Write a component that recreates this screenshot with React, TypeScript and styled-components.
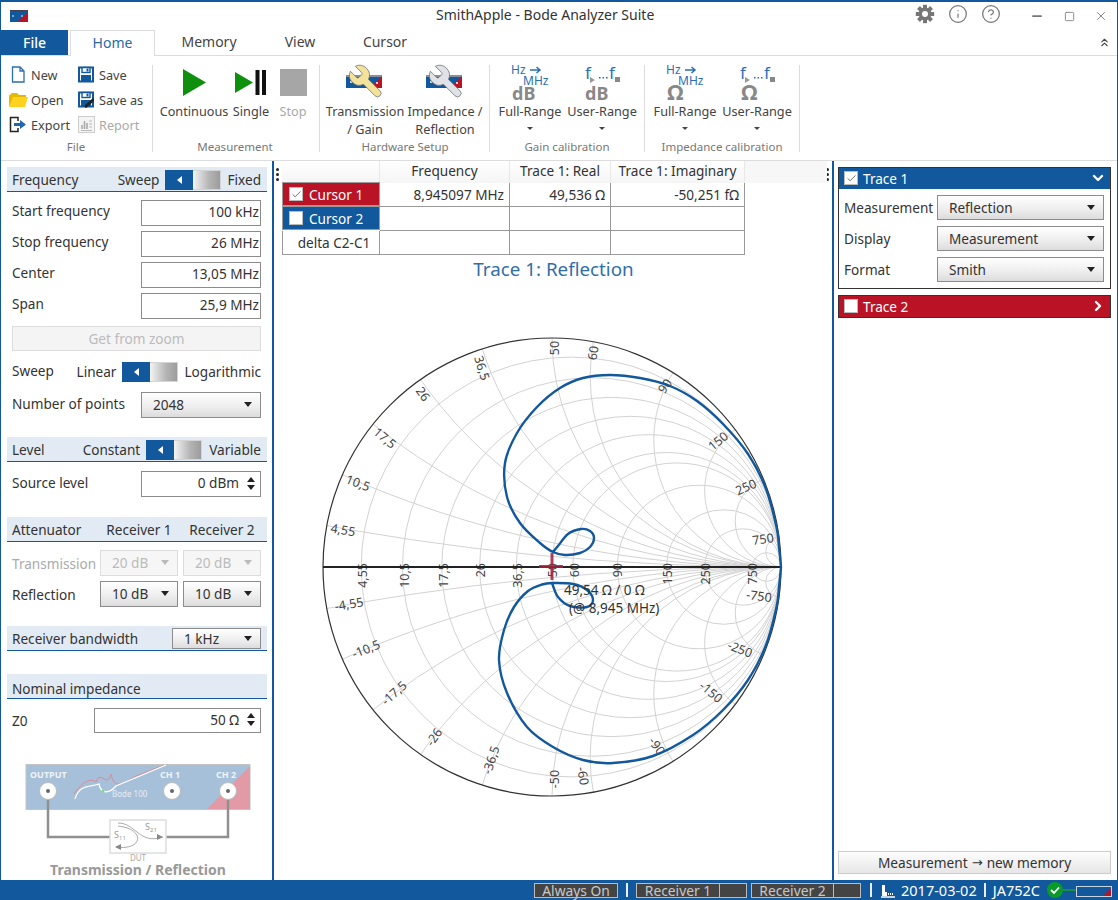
import React from 'react';
import styled, { createGlobalStyle } from 'styled-components';
import { Info, CircleHelp, X, Minus, Square, ChevronsUp, ChevronDown, ChevronRight, Check } from 'lucide-react';

const BLUE = '#12589c';
const RED = '#bb1326';
const FONT = '"Noto Sans", "Open Sans", "Liberation Sans", sans-serif';

const GlobalStyle = createGlobalStyle`
  html, body { margin: 0; padding: 0; background: #fff; }
  body { font-family: ${FONT}; font-size: 13.6px; color: #333; }
  * { box-sizing: border-box; }
`;

const Window = styled.div`
  width: 1118px; height: 900px; display: flex; flex-direction: column; overflow: hidden;
  border-top: 2px solid ${BLUE}; border-left: 1px solid ${BLUE}; border-right: 1px solid ${BLUE}; background: #fff;
`;
const TitleBar = styled.div`height: 28px; display: flex; align-items: center; flex: none;`;
const LogoSlot = styled.div`width: 435px; padding-left: 9px; display: flex; align-items: center; flex: none;`;
const Title = styled.div`font-size: 14px; color: #333; width: 217px; text-align: center; white-space: nowrap; margin-top: -3px;`;
const TitleIcons = styled.div`flex: 1; display: flex; align-items: center; padding-left: 255px; color: #777;`;
const TitleIcon = styled.span<{ $w: number; $ml?: number; $up?: number }>`
  width: ${p => p.$w}px; margin-left: ${p => p.$ml ?? 0}px; margin-top: ${p => -(p.$up ?? 0)}px;
  display: flex; justify-content: center; align-items: center;
`;

const TabRow = styled.div`height: 26px; display: flex; align-items: stretch; border-bottom: 1px solid #ddd; flex: none;`;
const FileTab = styled.div`width: 67px; height: 25px; padding-bottom: 1px; background: ${BLUE}; color: #fff; font-size: 14px; font-weight: 500; display: flex; align-items: center; justify-content: center;`;
const Tab = styled.div<{ $w: number; $active?: boolean }>`
  width: ${p => p.$w}px; height: ${p => (p.$active ? 26 : 25)}px; padding-bottom: 2px; font-size: 14px; display: flex; align-items: center; justify-content: center;
  color: ${p => (p.$active ? '#2a6aa6' : '#444')};
  ${p => p.$active && `margin-left: 2px; background:#fff; border:1px solid #ddd; border-bottom:none; position:relative;`}
`;
const Collapse = styled.div`margin-left: auto; padding-right: 6px; display: flex; align-items: center; color: #444;`;

const Ribbon = styled.div`height: 105px; padding-top: 6px; display: flex; border-bottom: 1px solid #ddd; flex: none;`;
const Group = styled.div<{ $w: number; $pl: number }>`width: ${p => p.$w}px; padding-left: ${p => p.$pl}px; height: 94px; display: flex; flex-direction: column; flex: none;`;
const GroupBody = styled.div`flex: 1; display: flex; min-height: 0;`;
const GroupLabel = styled.div<{ $offset: number }>`height: 18px; line-height: 18px; font-size: 11.5px; text-align: center; color: #777; margin-left: ${p => p.$offset}px; white-space: nowrap;`;
const Separator = styled.div`width: 1px; height: 87px; background: #ddd; margin-top: 3px; flex: none;`;
const SmallGrid = styled.div`display: grid; grid-template-columns: 68px 68px; grid-auto-rows: 25px; align-content: start;`;
const SmallButton = styled.div<{ $off?: boolean }>`display: flex; align-items: center; gap: 3px; font-size: 12.7px; white-space: nowrap; color: ${p => (p.$off ? '#aaa' : '#444')};`;
const SmallIcon = styled.span`width: 20px; height: 20px; display: flex; align-items: center; justify-content: center; flex: none;`;
const LargeButton = styled.div<{ $w: number; $off?: boolean }>`
  width: ${p => p.$w}px; display: flex; flex-direction: column; align-items: center; flex: none;
  font-size: 12.7px; line-height: 18px; text-align: center; white-space: nowrap; color: ${p => (p.$off ? '#aaa' : '#444')};
`;
const LargeIcon = styled.div`height: 40px; display: flex; align-items: center; justify-content: center;`;
const RibbonCaret = styled.div`width: 0; height: 0; margin-top: 7px; border-left: 3px solid transparent; border-right: 3px solid transparent; border-top: 3px solid #444;`;

const Main = styled.div`flex: 1; display: flex; min-height: 0;`;
const LeftPanel = styled.div`width: 273px; flex: none; border-right: 2px solid ${BLUE}; padding: 6px 5px 0 6px; display: flex; flex-direction: column;`;
const CenterPanel = styled.div`flex: 1; min-width: 0; position: relative; display: flex; flex-direction: column; padding-left: 8px;`;
const RightPanel = styled.div`width: 285px; flex: none; border-left: 2px solid ${BLUE}; padding: 6px 6px 6px 4px; display: flex; flex-direction: column;`;

const Section = styled.section<{ $gap: number }>`margin-bottom: ${p => p.$gap}px; flex: none;`;
const SectionHeader = styled.div`
  height: 25px; background: #e2ebf3; border-bottom: 1px solid ${BLUE}; display: flex; align-items: center;
  padding: 1px 6px 0 5px; color: #333; white-space: nowrap;
`;
const NominalHeader = styled(SectionHeader)`padding-top: 4px;`;
const AttHeader = styled(SectionHeader)`display: grid; grid-template-columns: 83px 78px 78px; column-gap: 5px;`;
const HeaderTitle = styled.span`flex: 1;`;
const CenterCell = styled.span`text-align: center;`;
const SectionBody = styled.div<{ $pt?: number }>`padding: ${p => p.$pt ?? 8}px 6px 0 5px; display: flex; flex-direction: column; gap: 5px;`;
const Row = styled.div<{ $h?: number; $mt?: number; $lh?: number }>`
  height: ${p => p.$h ?? 26}px; margin-top: ${p => p.$mt ?? 0}px; line-height: ${p => p.$lh ?? 22}px;
  display: flex; align-items: flex-start; justify-content: space-between; white-space: nowrap;
`;
const AttRow = styled.div<{ $off?: boolean }>`height: 26px; display: grid; grid-template-columns: 83px 78px 78px; column-gap: 5px; align-items: center; color: ${p => (p.$off ? '#aaa' : '#333')};`;
const ValueBox = styled.div<{ $w?: number }>`
  width: ${p => p.$w ?? 120}px; height: 100%; border: 1px solid #8c8c8c; background: #fff; display: flex; align-items: center; justify-content: flex-end;
  padding: 0 1px 2px 6px; color: #333;
`;
const Spin = styled.div`width: 14px; margin-left: 5px; margin-right: 1px; display: flex; flex-direction: column; gap: 3px; align-items: center;`;
const SpinArrow = styled.div<{ $up?: boolean }>`
  width: 0; height: 0; border-left: 4px solid transparent; border-right: 4px solid transparent;
  ${p => (p.$up ? 'border-bottom: 5px solid #222;' : 'border-top: 5px solid #222;')}
`;
const SelectBox = styled.div<{ $w?: number; $h?: number; $off?: boolean }>`
  width: ${p => (p.$w ? p.$w + 'px' : '100%')}; height: ${p => (p.$h ? p.$h + 'px' : '100%')};
  border: 1px solid ${p => (p.$off ? '#ddd' : '#8c8c8c')};
  background: ${p => (p.$off ? '#f6f6f6' : 'linear-gradient(#fff, #ededed 60%, #dcdcdc)')};
  color: ${p => (p.$off ? '#bbb' : '#333')};
  display: flex; align-items: center; justify-content: space-between; padding: 0 8px 1px 11px; line-height: normal;
`;
const Caret = styled.div<{ $off?: boolean }>`width: 0; height: 0; border-left: 4.5px solid transparent; border-right: 4.5px solid transparent; border-top: 5px solid ${p => (p.$off ? '#bbb' : '#222')};`;
const ActionButton = styled.div<{ $off?: boolean }>`
  height: 25px; border: 1px solid #ddd; background: ${p => (p.$off ? '#f4f4f4' : 'linear-gradient(#fdfdfd, #e6e6e6)')}; display: flex; align-items: center; justify-content: center;
  color: ${p => (p.$off ? '#bbb' : '#333')};
`;
const GetZoom = styled(ActionButton)`margin-top: 2px;`;
const Toggle = styled.div`width: 56px; height: 20px; display: flex; flex: none;`;
const ToggleOn = styled.div`width: 28px; background: ${BLUE}; display: flex; align-items: center; justify-content: center;`;
const ToggleArrow = styled.div`width: 0; height: 0; border-top: 4px solid transparent; border-bottom: 4px solid transparent; border-right: 5px solid #fff;`;
const ToggleOff = styled.div`flex: 1; background: linear-gradient(to right, #f4f4f4, #b4b4b4 60%, #9c9c9c); border: 1px solid #d4d4d4; border-left: none;`;
const HeaderGap = styled.span<{ $w: number }>`width: ${p => p.$w}px; flex: none;`;

const DiagramWrap = styled.div`margin: 0 -5px 0 -6px; height: 115px; flex: none;`;

const TableGrid = styled.div`display: grid; grid-template-columns: 98px 130px 101px 134px; width: 464px; flex: none; position: relative;`;
const HeadCell = styled.div`height: 22px; padding-bottom: 3px; display: flex; align-items: center; justify-content: center; color: #333; background: linear-gradient(#fff, #f5f5f5); border-right: 1px solid #e8e8e8;`;
const HeadTail = styled.div`position: absolute; left: 463px; top: 0; width: 82px; height: 22px; background: #f7f7f7;`;
const NameCell = styled.div<{ $bg?: string }>`
  height: 24px; display: flex; align-items: center; padding-left: 6px; gap: 6px; white-space: nowrap;
  background: ${p => p.$bg || '#fff'}; color: ${p => (p.$bg ? '#fff' : '#333')};
  border: 1px solid #9a9a9a; border-top-width: ${p => (p.$bg ? 1 : 0)}px; margin-top: ${p => (p.$bg ? -1 : 0)}px;
  justify-content: ${p => (p.$bg ? 'flex-start' : 'center')};
`;
const DataCell = styled.div`height: 24px; border-right: 1px solid #9a9a9a; border-bottom: 1px solid #9a9a9a; display: flex; align-items: center; justify-content: flex-end; padding-right: 5px; color: #333;`;
const CheckBox = styled.span`width: 14px; height: 14px; background: #fff; border: 1px solid #bbb; display: inline-flex; align-items: center; justify-content: center; color: #666; flex: none;`;
const GripDots = styled.div<{ $left: number }>`position: absolute; left: ${p => p.$left}px; top: 7px; display: flex; flex-direction: column; gap: 2px;`;
const Dot = styled.span`width: 3px; height: 3px; border-radius: 50%; background: #222;`;
const ChartTitle = styled.div`height: 24px; margin: 2px 0 2px -7px; font-size: 18.8px; line-height: 24px; text-align: center; color: #2f6fa8; flex: none;`;
const ChartSvg = styled.svg`display: block; margin-left: -7px; flex: none;`;

const TracePanel = styled.div`border: 1px solid #333; flex: none;`;
const TraceHeader = styled.div<{ $bg: string }>`height: 21px; background: ${p => p.$bg}; color: #fff; display: flex; align-items: center; padding: 0 4px 1px 5px; gap: 5px;`;
const TraceTitle = styled.span`flex: 1;`;
const TraceBody = styled.div`padding: 6px 6px 6px 5px; display: grid; grid-template-columns: 93px 1fr; grid-auto-rows: 25px; row-gap: 6px; align-items: center;`;
const Trace2 = styled(TracePanel)`margin-top: 6px;`;
const MemoryButton = styled(ActionButton)`margin-top: auto; height: 23px; border-color: #ccc; font-size: 13.7px; gap: 4px;`;
const ArrowGlyph = styled.span`font-family: "DejaVu Sans", sans-serif; font-size: 13px;`;

const StatusBar = styled.div`height: 20px; background: ${BLUE}; display: flex; align-items: center; padding-left: 533px; color: #fff; font-size: 14.5px; flex: none; white-space: nowrap;`;
const StatusBox = styled.div<{ $w: number; $ml?: number }>`
  width: ${p => p.$w}px; margin-left: ${p => p.$ml ?? 0}px; height: 15px; background: #444; border: 1px solid #bbb; color: #c8c8c8;
  display: flex; align-items: center; font-size: 13.8px; line-height: 13px;
`;
const StatusCell = styled.span<{ $line?: boolean }>`flex: 1; text-align: center; ${p => p.$line && 'border-left: 1px solid #bbb; height: 100%; flex: none; width: 27px;'}`;
const StatusSep = styled.div<{ $ml: number }>`width: 2px; height: 14px; background: #e8eef5; margin-left: ${p => p.$ml}px; flex: none;`;
const StatusSvg = styled.svg`margin-left: 8px; flex: none;`;
const StatusText = styled.span<{ $ml: number }>`margin-left: ${p => p.$ml}px;`;
const DeviceSvg = styled.svg`margin-left: 5px; flex: none;`;

/* ---- Drawings ---- */
const cx = 552, cy = 567, R = 229;
const vals = [4.55, 10.5, 17.5, 26, 36.5, 50, 60, 90, 150, 250, 750];
const axisLabels: [string, number][] = [['4,55', 362], ['10,5', 404], ['17,5', 443], ['26', 480], ['36,5', 517], ['50', 552], ['60', 574], ['90', 617], ['150', 667], ['250', 705], ['750', 752]];
const outerLabels: [string, number, number, number][] = [
  ['4,55', 343, 530, 10], ['10,5', 358, 483, 21], ['17,5', 385, 438, 40], ['26', 423, 394, 55], ['36,5', 482, 368, 72], ['50', 554, 348, -90],
  ['60', 593, 353, -80], ['90', 665, 386, -53], ['150', 718, 441, -40], ['250', 746, 487, -24], ['750', 763, 539, -8],
  ['-4,55', 349, 604, -10], ['-10,5', 366, 649, -22], ['-17,5', 394, 693, -42], ['-26', 434, 737, -55], ['-36,5', 491, 760, -72], ['-50', 554, 779, -90],
  ['-60', 583, 776, 80], ['-90', 657, 746, 55], ['-150', 711, 692, 40], ['-250', 740, 649, 22], ['-750', 759, 596, 8],
];
const spline = (pts: number[][]) => {
  let d = `M${pts[0][0]} ${pts[0][1]}`;
  for (let i = 0; i < pts.length - 1; i++) {
    const p0 = pts[Math.max(i - 1, 0)], p1 = pts[i], p2 = pts[i + 1], p3 = pts[Math.min(i + 2, pts.length - 1)];
    d += ` C${(p1[0] + (p2[0] - p0[0]) / 6).toFixed(1)} ${(p1[1] + (p2[1] - p0[1]) / 6).toFixed(1)} ${(p2[0] - (p3[0] - p1[0]) / 6).toFixed(1)} ${(p2[1] - (p3[1] - p1[1]) / 6).toFixed(1)} ${p2[0]} ${p2[1]}`;
  }
  return d;
};
const topTrace = [[781, 567], [779, 547], [776.5, 527], [766, 489], [748, 454], [723, 424], [697, 401], [670, 386], [640, 378], [610, 375], [583, 378], [560, 388], [537, 407], [517, 433], [505, 463], [507, 497], [520, 523], [540, 543], [553, 552], [565, 555], [580, 553], [590, 547], [594, 538], [590, 531], [581, 529], [568, 534], [558, 546], [553, 552]];
const botTrace = [[781, 567], [779, 587], [776.5, 607], [766, 645], [748, 680], [723, 710], [693, 735], [653, 756], [613, 763], [583, 760], [553, 747], [527, 727], [507, 693], [499, 660], [504, 630], [514, 607], [528, 591], [542, 584.5], [552, 583], [573, 584], [587, 590], [593, 600], [587, 607], [570, 606], [558, 597], [552, 583]];

const SmithChart = () => (
  <ChartSvg width={556} height={597} viewBox="275 283 556 597">
    <defs><clipPath id="unit"><circle cx={cx} cy={cy} r={R} /></clipPath></defs>
    <g clipPath="url(#unit)" fill="none" stroke="#d2d2d2" strokeWidth="1">
      {vals.map(v => { const r = v / 50; return <circle key={'r' + v} cx={cx + R * r / (1 + r)} cy={cy} r={R / (1 + r)} />; })}
      {vals.map(v => { const x = 50 / v; return (
        <React.Fragment key={'x' + v}>
          <circle cx={cx + R} cy={cy - R * x} r={R * x} />
          <circle cx={cx + R} cy={cy + R * x} r={R * x} />
        </React.Fragment>
      ); })}
    </g>
    <circle cx={cx} cy={cy} r={R} fill="none" stroke="#333" strokeWidth="1.2" />
    <g fontFamily={FONT} fontSize="12.5" fill="#444">
      {axisLabels.map(([t, x]) => <text key={t} textAnchor="end" transform={`translate(${x + 5} 563) rotate(-90)`}>{t}</text>)}
      {outerLabels.map(([t, x, y, a]) => <text key={t + 'o'} textAnchor="middle" transform={`translate(${x} ${y}) rotate(${a}) translate(0 4.5)`}>{t}</text>)}
    </g>
    <path d={`M${cx - R} ${cy}H${cx + R}`} stroke="#222" strokeWidth="2" />
    <path d={spline(topTrace)} fill="none" stroke={BLUE} strokeWidth="2.4" />
    <path d={spline(botTrace)} fill="none" stroke={BLUE} strokeWidth="2.4" />
    <path d="M539 566.5H563M552 553V580" stroke="#a5203f" strokeWidth="3" opacity=".85" />
    <g fontFamily={FONT} fontSize="13.5" fill="#333">
      <text x="564" y="595">49,54 Ω / 0 Ω</text>
      <text x="569" y="613">(@ 8,945 MHz)</text>
    </g>
  </ChartSvg>
);

const Logo = () => (
  <svg width="18" height="12" viewBox="0 0 18 12">
    <rect width="18" height="12" fill={BLUE} />
    <path d="M18 2V12H7Z" fill={RED} />
    <rect x="0" y="0" width="18" height="2" fill="#445" />
    <circle cx="3" cy="6" r=".8" fill="#fff" /><circle cx="12" cy="6" r=".8" fill="#fff" />
  </svg>
);
const Gear = () => (
  <svg width="20" height="20" viewBox="0 0 20 20">
    <g fill="#777"><circle cx="10" cy="10" r="6.4" />
      {[0, 45, 90, 135, 180, 225, 270, 315].map(a => <rect key={a} x="8" y="0.8" width="4" height="4" transform={`rotate(${a} 10 10)`} />)}
    </g>
    <circle cx="10" cy="10" r="3" fill="#fff" />
  </svg>
);
const NewIcon = () => <svg width="14" height="17" viewBox="0 0 14 17"><path d="M1.5 1H9L13 5V16H1.5Z M9 1V5H13" fill="#fff" stroke="#2a6fb0" strokeWidth="1.3" /></svg>;
const OpenIcon = () => <svg width="19" height="15" viewBox="0 0 19 15"><path d="M0 15V3H1L3 1H8L10 3H17V5H5Z" fill="#e6b800" /><path d="M0 15L4 5H19L16 15Z" fill="#ffd21f" /></svg>;
const ExportIcon = () => <svg width="18" height="17" viewBox="0 0 18 17"><path d="M9 5V1.5H1.5V15.5H9V12" fill="none" stroke="#222" strokeWidth="1.5" /><path d="M5 7H11V4L17 8.5L11 13V10H5Z" fill="#1f65b0" /></svg>;
const SaveIcon = ({ pen }: { pen?: boolean }) => (
  <svg width="16" height="17" viewBox="0 0 16 17">
    <path d="M1 1.5H15V15.5H1Z" fill="#fff" stroke={BLUE} strokeWidth="2" />
    <rect x="4" y="1.5" width="8" height="5" fill="#fff" stroke={BLUE} strokeWidth="1.4" /><rect x="8.5" y="2.5" width="2" height="3" fill={BLUE} />
    <rect x="3" y="9" width="10" height="6" fill={BLUE} />
    {pen && <path d="M16 8L7 16" stroke="#222" strokeWidth="3" />}
  </svg>
);
const ReportIcon = () => (
  <svg width="17" height="17" viewBox="0 0 17 17"><rect x=".5" y=".5" width="16" height="16" fill="#f4f4f4" stroke="#ccc" />
    <path d="M4 13V9M6.5 13V5M9 13V7" stroke="#aaa" strokeWidth="1.6" /><path d="M11 5H14M11 8H14M11 11H14M3 14.5H14" stroke="#bbb" /></svg>
);
const PlayIcon = () => <svg width="23" height="27" viewBox="0 0 23 27"><path d="M0 0L23 13.5L0 27Z" fill="#0e8f0e" /></svg>;
const SingleIcon = () => (
  <svg width="32" height="27" viewBox="0 0 32 27"><path d="M0 3L18 13.5L0 24Z" fill="#0e8f0e" /><rect x="20.5" y="1" width="4" height="25" fill="#111" /><rect x="27" y="1" width="4" height="25" fill="#111" /></svg>
);
const StopIcon = () => <svg width="27" height="27"><rect width="27" height="27" fill="#a6a6a6" /></svg>;
const WrenchIcon = ({ fill }: { fill: string }) => (
  <svg width="40" height="40" viewBox="0 0 40 40">
    <rect x="1" y="14" width="36" height="12" fill={BLUE} />
    <rect x="1" y="13" width="36" height="2" fill="#8a8f99" />
    <path d="M37 14V26H25Z" fill={RED} />
    <circle cx="6" cy="20" r="1" fill="#fff" /><circle cx="32" cy="21" r="1" fill="#fff" />
    <g transform="translate(41 0) scale(-1.66 1.66)">
      <path d="M14.7 6.3a1 1 0 0 0 0 1.4l1.6 1.6a1 1 0 0 0 1.4 0l3.77-3.77a6 6 0 0 1-7.94 7.94l-6.91 6.91a2.12 2.12 0 0 1-3-3l6.91-6.91a6 6 0 0 1 7.94-7.94l-3.76 3.76z" fill={fill} stroke="#777" strokeWidth=".5" />
    </g>
  </svg>
);
const CalIcon = ({ kind, sym, symX }: { kind: 'full' | 'user'; sym: string; symX: number }) => (
  <svg width="66" height="48" viewBox="0 -4 66 48" fontFamily={FONT}>
    {kind === 'full' ? (
      <g fill="#2a6fb5" fontSize="12">
        <text x="14" y="12">Hz</text><path d="M33 8H42M39.5 5L43 8L39.5 11" fill="none" stroke="#2a6fb5" strokeWidth="1.5" />
        <text x="26" y="23">MHz</text>
      </g>
    ) : (
      <g fill="#2a6fb5">
        <text x="16" y="17" fontSize="17">f</text>
        <path d="M21 15L26 18L21 21Z" fill="#999" />
        <path d="M30 15h1.6v1.6H30ZM33.5 15h1.6v1.6h-1.6ZM37 15h1.6v1.6H37Z" />
        <text x="40" y="17" fontSize="17">f</text>
        <rect x="46" y="15" width="5" height="5" fill="#888" />
      </g>
    )}
    <text x={symX} y="38" fontSize={sym === 'dB' ? 18 : 22} fontWeight="700" fill="#888">{sym}</text>
  </svg>
);
const Diagram = () => (
  <svg width="272" height="115" viewBox="0 765 272 115" fontFamily={FONT}>
    <rect x="25" y="765.5" width="224" height="45" fill="#a6c0da" stroke="#c4c4c4" />
    <path d="M206 810L249 767V810Z" fill="#e29aa6" />
    <path d="M73 795C80 785 88 778 95 783C100 770 106 790 110 775C113 790 120 786 135 777L163 766" fill="none" stroke="#d98a99" />
    <path d="M74 800C78 785 90 788 98 785C100 795 108 795 115 787L165 766" fill="none" stroke="#fff" strokeWidth="1.3" />
    <circle cx="102" cy="792" r="1.5" fill="#7fdc7f" />
    <text x="29" y="779" fontSize="9" fontWeight="700" fill="#eef3f8">OUTPUT</text>
    <text x="159" y="779" fontSize="9" fontWeight="700" fill="#eef3f8">CH 1</text>
    <text x="215" y="779" fontSize="9" fontWeight="700" fill="#eef3f8">CH 2</text>
    <text x="111" y="798" fontSize="8" fill="#e6edf4">Bode 100</text>
    <path d="M47 792V838H109M165 838H227V792" fill="none" stroke="#909090" strokeWidth="2.5" />
    {[47, 171, 227].map(x => <g key={x}><circle cx={x} cy="792" r="8.5" fill="#fff" stroke="#bbb" /><circle cx={x} cy="792" r="2" fill="#666" /></g>)}
    <rect x="109" y="821" width="56" height="33" fill="#fff" stroke="#ddd" strokeWidth="1.5" />
    <path d="M117 824C135 824 138 846 162 838M117 827C145 830 142 852 115 848" fill="none" stroke="#aaa" />
    <path d="M156 835L162 838L156 841ZM120 845L114 848L120 851Z" fill="#888" />
    <text x="113" y="839" fontSize="9" fill="#999">S<tspan fontSize="6" dy="2">11</tspan></text>
    <text x="144" y="831" fontSize="9" fill="#999">S<tspan fontSize="6" dy="2">21</tspan></text>
    <text x="137" y="862" fontSize="8" textAnchor="middle" fill="#aaa">DUT</text>
    <text x="137" y="876" fontSize="14" fontWeight="700" textAnchor="middle" fill="#999">Transmission / Reflection</text>
  </svg>
);
const TeeIcon = () => (
  <StatusSvg width="16" height="15" viewBox="0 0 16 15"><path d="M2 13V2H5V9H7V13H2Z" fill="#fff" /><path d="M1 14H15" stroke="#fff" strokeWidth="1.5" /><path d="M8 11H14" stroke="#fff" strokeWidth="2" strokeDasharray="1 1" /></StatusSvg>
);
const DeviceLink = () => (
  <DeviceSvg width="68" height="20" viewBox="0 0 68 20">
    <circle cx="10" cy="10" r="8" fill="#0a9a2a" />
    <path d="M6 10L9 13L14 7.5" fill="none" stroke="#fff" strokeWidth="1.8" />
    <path d="M18 10H31" stroke="#16a02f" strokeWidth="1.6" />
    <rect x="31.5" y="6.5" width="35" height="10" fill={BLUE} stroke="#c8d4e0" />
    <path d="M66 8V16H58Z" fill={RED} />
  </DeviceSvg>
);

const ToggleSwitch = () => <Toggle><ToggleOn><ToggleArrow /></ToggleOn><ToggleOff /></Toggle>;
const Select = (p: { children?: React.ReactNode; $off?: boolean; $w?: number; $h?: number }) => (
  <SelectBox $off={p.$off} $w={p.$w} $h={p.$h}><span>{p.children}</span><Caret $off={p.$off} /></SelectBox>
);
const Spinner = () => <Spin><SpinArrow $up /><SpinArrow /></Spin>;
const Grip = ({ left }: { left: number }) => <GripDots $left={left}><Dot /><Dot /><Dot /></GripDots>;
const SweepWrap = styled.span`display: flex; align-items: center; gap: 6px; height: 100%;`;
const SweepChoice = () => <SweepWrap><span>Linear</span><ToggleSwitch /><span>Logarithmic</span></SweepWrap>;

export default function App() {
  return (
    <Window>
      <GlobalStyle />
      <TitleBar>
        <LogoSlot><Logo /></LogoSlot>
        <Title>SmithApple - Bode Analyzer Suite</Title>
        <TitleIcons>
          <TitleIcon $w={33} $up={4}><Gear /></TitleIcon>
          <TitleIcon $w={33} $up={4}><Info size={20} strokeWidth={1.5} /></TitleIcon>
          <TitleIcon $w={33} $up={4}><CircleHelp size={20} strokeWidth={1.5} /></TitleIcon>
          <TitleIcon $w={45} $ml={7}><Minus size={14} strokeWidth={3} /></TitleIcon>
          <TitleIcon $w={20}><Square size={11} strokeWidth={1.8} /></TitleIcon>
          <TitleIcon $w={44}><X size={14} strokeWidth={1.5} /></TitleIcon>
        </TitleIcons>
      </TitleBar>
      <TabRow>
        <FileTab>File</FileTab>
        <Tab $w={85} $active>Home</Tab>
        <Tab $w={108}>Memory</Tab>
        <Tab $w={74}>View</Tab>
        <Tab $w={96}>Cursor</Tab>
        <Collapse><ChevronsUp size={13} /></Collapse>
      </TabRow>
      <Ribbon>
        <Group $w={151} $pl={7}>
          <GroupBody>
            <SmallGrid>
              <SmallButton><SmallIcon><NewIcon /></SmallIcon>New</SmallButton>
              <SmallButton><SmallIcon><SaveIcon /></SmallIcon>Save</SmallButton>
              <SmallButton><SmallIcon><OpenIcon /></SmallIcon>Open</SmallButton>
              <SmallButton><SmallIcon><SaveIcon pen /></SmallIcon>Save as</SmallButton>
              <SmallButton><SmallIcon><ExportIcon /></SmallIcon>Export</SmallButton>
              <SmallButton $off><SmallIcon><ReportIcon /></SmallIcon>Report</SmallButton>
            </SmallGrid>
          </GroupBody>
          <GroupLabel $offset={-8}>File</GroupLabel>
        </Group>
        <Separator />
        <Group $w={166} $pl={6}>
          <GroupBody>
            <LargeButton $w={70}><LargeIcon><PlayIcon /></LargeIcon>Continuous</LargeButton>
            <LargeButton $w={44}><LargeIcon><SingleIcon /></LargeIcon>Single</LargeButton>
            <LargeButton $w={40} $off><LargeIcon><StopIcon /></LargeIcon>Stop</LargeButton>
          </GroupBody>
          <GroupLabel $offset={-8}>Measurement</GroupLabel>
        </Group>
        <Separator />
        <Group $w={169} $pl={5}>
          <GroupBody>
            <LargeButton $w={80}><LargeIcon><WrenchIcon fill="#f3e39a" /></LargeIcon>Transmission<br />/ Gain</LargeButton>
            <LargeButton $w={80}><LargeIcon><WrenchIcon fill="#dfe3e8" /></LargeIcon>Impedance /<br />Reflection</LargeButton>
          </GroupBody>
          <GroupLabel $offset={-4}>Hardware Setup</GroupLabel>
        </Group>
        <Separator />
        <Group $w={154} $pl={4}>
          <GroupBody>
            <LargeButton $w={72}><LargeIcon><CalIcon kind="full" sym="dB" symX={15} /></LargeIcon>Full-Range<RibbonCaret /></LargeButton>
            <LargeButton $w={72}><LargeIcon><CalIcon kind="user" sym="dB" symX={16} /></LargeIcon>User-Range<RibbonCaret /></LargeButton>
          </GroupBody>
          <GroupLabel $offset={-4}>Gain calibration</GroupLabel>
        </Group>
        <Separator />
        <Group $w={154} $pl={4}>
          <GroupBody>
            <LargeButton $w={72}><LargeIcon><CalIcon kind="full" sym="Ω" symX={15} /></LargeIcon>Full-Range<RibbonCaret /></LargeButton>
            <LargeButton $w={72}><LargeIcon><CalIcon kind="user" sym="Ω" symX={17} /></LargeIcon>User-Range<RibbonCaret /></LargeButton>
          </GroupBody>
          <GroupLabel $offset={-4}>Impedance calibration</GroupLabel>
        </Group>
        <Separator />
      </Ribbon>
      <Main>
        <LeftPanel>
          <Section $gap={19}>
            <SectionHeader>
              <HeaderTitle>Frequency</HeaderTitle>
              <span>Sweep</span><HeaderGap $w={6} /><ToggleSwitch /><HeaderGap $w={6} /><span>Fixed</span>
            </SectionHeader>
            <SectionBody>
              <Row>Start frequency<ValueBox>100 kHz</ValueBox></Row>
              <Row>Stop frequency<ValueBox>26 MHz</ValueBox></Row>
              <Row>Center<ValueBox>13,05 MHz</ValueBox></Row>
              <Row>Span<ValueBox>25,9 MHz</ValueBox></Row>
              <GetZoom $off>Get from zoom</GetZoom>
              <Row $h={20} $mt={6} $lh={18}>
                <span>Sweep</span>
                <SweepChoice />
              </Row>
              <Row $mt={5} $lh={24}>Number of points<Select $w={120}>2048</Select></Row>
            </SectionBody>
          </Section>
          <Section $gap={20}>
            <SectionHeader>
              <HeaderTitle>Level</HeaderTitle>
              <span>Constant</span><HeaderGap $w={6} /><ToggleSwitch /><HeaderGap $w={7} /><span>Variable</span>
            </SectionHeader>
            <SectionBody $pt={9}>
              <Row $lh={24}>Source level<ValueBox>0 dBm<Spinner /></ValueBox></Row>
            </SectionBody>
          </Section>
          <Section $gap={19}>
            <AttHeader>
              <span>Attenuator</span><CenterCell>Receiver 1</CenterCell><CenterCell>Receiver 2</CenterCell>
            </AttHeader>
            <SectionBody>
              <AttRow $off><span>Transmission</span><Select $off $h={26}>20 dB</Select><Select $off $h={26}>20 dB</Select></AttRow>
              <AttRow><span>Reflection</span><Select $h={26}>10 dB</Select><Select $h={26}>10 dB</Select></AttRow>
            </SectionBody>
          </Section>
          <Section $gap={23}>
            <SectionHeader>
              <HeaderTitle>Receiver bandwidth</HeaderTitle>
              <Select $w={89} $h={21}>1 kHz</Select>
            </SectionHeader>
          </Section>
          <Section $gap={31}>
            <NominalHeader>Nominal impedance</NominalHeader>
            <SectionBody $pt={9}>
              <Row $h={25} $lh={25}>Z0<ValueBox $w={167}>50 Ω<Spinner /></ValueBox></Row>
            </SectionBody>
          </Section>
          <DiagramWrap><Diagram /></DiagramWrap>
        </LeftPanel>
        <CenterPanel>
          <Grip left={2} />
          <Grip left={552} />
          <TableGrid>
            <HeadTail />
            <HeadCell />
            <HeadCell>Frequency</HeadCell>
            <HeadCell>Trace 1: Real</HeadCell>
            <HeadCell>Trace 1: Imaginary</HeadCell>
            <NameCell $bg={RED}><CheckBox><Check size={11} strokeWidth={2} /></CheckBox>Cursor 1</NameCell>
            <DataCell>8,945097 MHz</DataCell><DataCell>49,536 Ω</DataCell><DataCell>-50,251 fΩ</DataCell>
            <NameCell $bg={BLUE}><CheckBox />Cursor 2</NameCell>
            <DataCell /><DataCell /><DataCell />
            <NameCell>delta C2-C1</NameCell>
            <DataCell /><DataCell /><DataCell />
          </TableGrid>
          <ChartTitle>Trace 1: Reflection</ChartTitle>
          <SmithChart />
        </CenterPanel>
        <RightPanel>
          <TracePanel>
            <TraceHeader $bg={BLUE}>
              <CheckBox><Check size={11} strokeWidth={2} /></CheckBox>
              <TraceTitle>Trace 1</TraceTitle>
              <ChevronDown size={16} strokeWidth={3.5} />
            </TraceHeader>
            <TraceBody>
              <span>Measurement</span><Select>Reflection</Select>
              <span>Display</span><Select>Measurement</Select>
              <span>Format</span><Select>Smith</Select>
            </TraceBody>
          </TracePanel>
          <Trace2>
            <TraceHeader $bg={RED}>
              <CheckBox />
              <TraceTitle>Trace 2</TraceTitle>
              <ChevronRight size={16} strokeWidth={3.5} />
            </TraceHeader>
          </Trace2>
          <MemoryButton><span>Measurement</span><ArrowGlyph>→</ArrowGlyph><span>new memory</span></MemoryButton>
        </RightPanel>
      </Main>
      <StatusBar>
        <StatusBox $w={84}><StatusCell>Always On</StatusCell></StatusBox>
        <StatusSep $ml={8} />
        <StatusBox $w={111} $ml={8}><StatusCell>Receiver 1</StatusCell><StatusCell $line /></StatusBox>
        <StatusBox $w={110} $ml={4}><StatusCell>Receiver 2</StatusCell><StatusCell $line /></StatusBox>
        <StatusSep $ml={9} />
        <TeeIcon />
        <StatusText $ml={5}>2017-03-02</StatusText>
        <StatusSep $ml={7} />
        <StatusText $ml={7}>JA752C</StatusText>
        <DeviceLink />
      </StatusBar>
    </Window>
  );
}
